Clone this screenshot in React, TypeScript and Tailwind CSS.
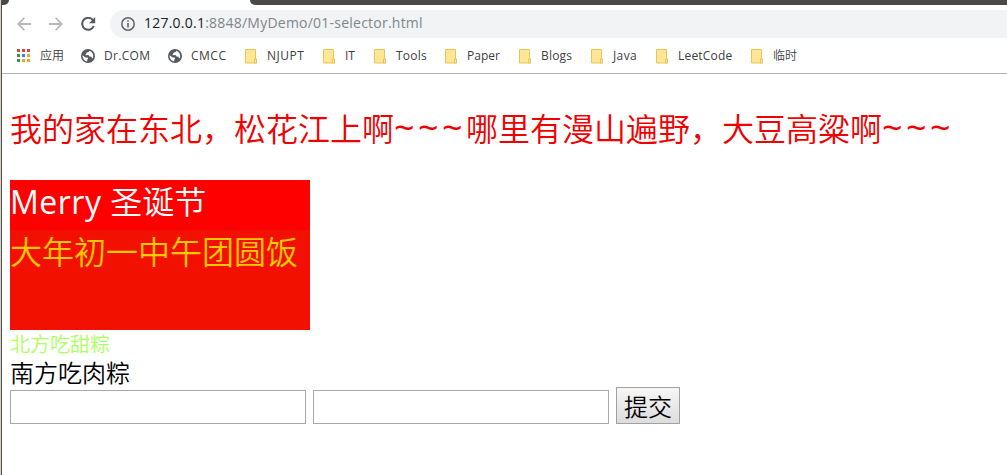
import React from "react";

function Globe() {
  return (
    <svg width="14" height="14" viewBox="0 0 14 14" className="shrink-0">
      <circle cx="7" cy="7" r="7" fill="#56595e" />
      <path
        d="M1.6 6.2 4.6 8.4 6.6 8.6 7.2 9.8 6.2 10.6v1.7C3.6 12 1.4 9.6 1.6 6.2zM8.4 1.7 7.8 3 5.8 3.4 5 5 4.4 6.2 7.4 6 8.6 7.6 10.4 7.8 11.2 9.4 12.1 8.6C12.7 5.6 11.4 2.8 8.4 1.7z"
        fill="#fff"
      />
    </svg>
  );
}

function Folder() {
  return (
    <svg width="13" height="15" viewBox="0 0 13 15" className="shrink-0">
      <path d="M.5.5h10v9.5h1v4H.5z" fill="#ffe694" stroke="#e6c65c" />
      <path d="M9.5 10h2v4h-2z" fill="#ffe694" stroke="#e6c65c" />
    </svg>
  );
}

function Apps() {
  const colors = ["#d04a3f", "#d04a3f", "#d04a3f", "#35955a", "#3b7ddd", "#e3a92f", "#35955a", "#e3a92f", "#e3a92f"];
  return (
    <svg width="14" height="14" viewBox="0 0 14 14" className="shrink-0">
      {colors.map((c, i) => (
        <rect key={i} x={(i % 3) * 5} y={Math.floor(i / 3) * 5} width="3" height="3" fill={c} />
      ))}
    </svg>
  );
}

const bookmarks = [
  { label: "应用", kind: "apps", box: "w-16", text: "font-[350]" },
  { label: "Dr.COM", kind: "globe", box: "w-[87px]", text: "tracking-[0.3px]" },
  { label: "CMCC", kind: "globe", box: "w-[77px]", text: "tracking-[0.5px]" },
  { label: "NJUPT", kind: "folder", box: "w-[78px]", text: "tracking-[0.5px] -ml-px" },
  { label: "IT", kind: "folder", box: "w-[51px]", text: "-ml-px" },
  { label: "Tools", kind: "folder", box: "w-[71px]", text: "tracking-[0.2px] -ml-px" },
  { label: "Paper", kind: "folder", box: "w-[74px]", text: "-ml-px" },
  { label: "Blogs", kind: "folder", box: "w-[72px]", text: "tracking-[0.2px] -ml-px" },
  { label: "Java", kind: "folder", box: "w-[65px]", text: "tracking-[0.4px] -ml-px" },
  { label: "LeetCode", kind: "folder", box: "w-[95px]", text: "tracking-[0.2px] -ml-px" },
  { label: "临时", kind: "folder", box: "w-16", text: "-ml-px font-[350]" },
];

function Toolbar() {
  return (
    <div className="flex h-[32px] items-center pl-[15px] pt-px">
      <svg width="14" height="14" viewBox="0 0 14 14" fill="none" stroke="#b8babd" strokeWidth="1.8">
        <path d="M14 7H1.5M7.3.8 1.2 7l6.1 6.2" />
      </svg>
      <svg width="14" height="14" viewBox="0 0 14 14" fill="none" stroke="#b8babd" strokeWidth="1.8" className="ml-[18px]">
        <path d="M0 7h12.5M6.7.8 12.8 7l-6.1 6.2" />
      </svg>
      <svg width="15" height="14" viewBox="0 0 15 14" className="ml-[18px]">
        <path d="M12 3.2A6 6 0 1 0 12.8 9" fill="none" stroke="#56595e" strokeWidth="2" />
        <path d="M14.2 0v6.2H8z" fill="#56595e" />
      </svg>
      <div className="ml-[14px] flex h-7 flex-1 items-center rounded-l-full bg-[#f1f3f4] pl-[11px]">
        <svg width="14" height="14" viewBox="0 0 14 14" className="shrink-0">
          <circle cx="7" cy="7" r="6.2" fill="none" stroke="#5f6368" strokeWidth="1.5" />
          <path d="M6.2 3.2h1.6v1.6H6.2zM6.2 6h1.6v4.6H6.2z" fill="#5f6368" />
        </svg>
        <span className="ml-[9px] -mt-px text-[14px] leading-[26px] tracking-[0.23px] whitespace-nowrap text-[#80868b]">
          <span className="text-[#202124]">127.0.0.1</span>:8848/MyDemo/01-selector.html
        </span>
      </div>
    </div>
  );
}

function Tildes() {
  return <span className="text-[36px] leading-none font-normal tracking-[3.4px]">~~~</span>;
}

export default function App() {
  return (
    <div className="flex h-[475px] w-full overflow-hidden bg-white font-['Open_Sans','Noto_Sans_CJK_SC',sans-serif]">
      <div className="w-[2px] shrink-0 border-r border-[#56524a] bg-[#d4d0c8]" />
      <div className="flex min-w-0 flex-1 flex-col">
        <div className="flex h-[5px] justify-between">
          <div className="w-[7px] rounded-br-[6px] bg-[#4b4945]" />
          <div className="w-[757px] rounded-bl-[6px] bg-[#4b4945]" />
        </div>
        <div className="h-[2px]" />
        <Toolbar />
        <div className="flex h-[35px] items-center border-b border-[#b3b3b3] pl-[15px]">
          {bookmarks.map((b) => (
            <div key={b.label} className={`flex shrink-0 items-center ${b.box}`}>
              <div className="flex w-[22px] shrink-0">
                {b.kind === "apps" ? <Apps /> : b.kind === "globe" ? <Globe /> : <Folder />}
              </div>
              <span className={`pl-px text-[12px] leading-4 whitespace-nowrap text-[#3c4043] ${b.text}`}>{b.label}</span>
            </div>
          ))}
        </div>
        <main className="flex flex-col items-start pl-2 font-[350]">
          <p className="mt-[33px] h-[43px] text-[32px] leading-[43px] whitespace-nowrap text-[#f00000]">
            我的家在东北，松花江上啊<Tildes />哪里有漫山遍野，大豆高粱啊<Tildes />
          </p>
          <div className="mt-[30px] h-[50px] w-[300px] bg-[#ff0000] text-[32px] leading-[43px] text-white">
            <span className="font-normal tracking-[0.5px]">Merry </span>圣诞节
          </div>
          <div className="h-[100px] w-[300px] bg-[#f21100] text-[32px] leading-[43px] text-[#ffc800]">大年初一中午团圆饭</div>
          <div className="h-[27px] text-[20px] leading-[29px] text-[#adff5f]">北方吃甜粽</div>
          <div className="h-[30px] text-[24px] leading-[31px] text-black">南方吃肉粽</div>
          <form className="flex items-end" onSubmit={(e) => e.preventDefault()}>
            <input className="h-[34px] w-[296px] border border-[#a9a9a9] bg-white px-1 text-[24px] outline-none" />
            <input className="ml-[7px] h-[34px] w-[296px] border border-[#a9a9a9] bg-white px-1 text-[24px] outline-none" />
            <button className="ml-[7px] h-[37px] w-16 border border-[#a0a0a0] bg-linear-to-b from-[#f6f6f6] to-[#dddddd] text-[24px] leading-[37px] text-black">
              提交
            </button>
          </form>
        </main>
      </div>
    </div>
  );
}
